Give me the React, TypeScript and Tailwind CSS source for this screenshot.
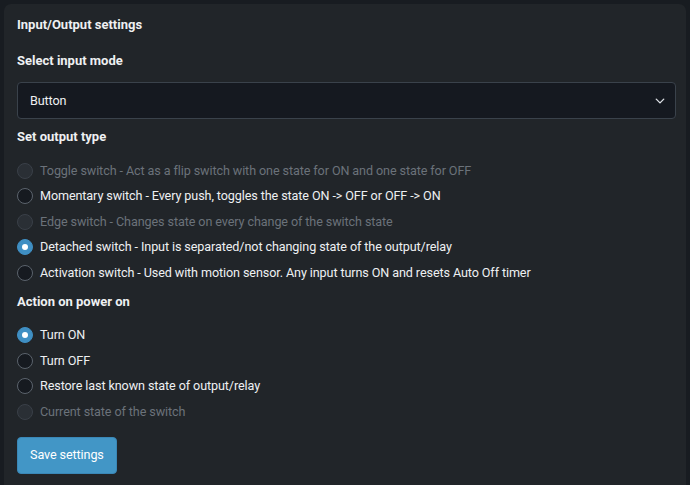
import React, { useState } from 'react';

interface Option {
  value: string;
  label: string;
  disabled?: boolean;
}

const outputTypes: Option[] = [
  { value: 'toggle', label: 'Toggle switch - Act as a flip switch with one state for ON and one state for OFF', disabled: true },
  { value: 'momentary', label: 'Momentary switch - Every push, toggles the state ON -> OFF or OFF -> ON' },
  { value: 'edge', label: 'Edge switch - Changes state on every change of the switch state', disabled: true },
  { value: 'detached', label: 'Detached switch - Input is separated/not changing state of the output/relay' },
  { value: 'activation', label: 'Activation switch - Used with motion sensor. Any input turns ON and resets Auto Off timer' },
];

const powerOnActions: Option[] = [
  { value: 'on', label: 'Turn ON' },
  { value: 'off', label: 'Turn OFF' },
  { value: 'restore', label: 'Restore last known state of output/relay' },
  { value: 'switch', label: 'Current state of the switch', disabled: true },
];

const RadioGroup: React.FC<{
  name: string;
  options: Option[];
  value: string;
  onChange: (v: string) => void;
}> = ({ name, options, value, onChange }) => (
  <div className="flex flex-col">
    {options.map(opt => {
      const checked = opt.value === value;
      return (
        <label
          key={opt.value}
          className={`flex h-[25.5px] items-center gap-[7px] ${opt.disabled ? 'cursor-default' : 'cursor-pointer'}`}
        >
          <input
            type="radio"
            name={name}
            className="sr-only"
            checked={checked}
            disabled={opt.disabled}
            onChange={() => onChange(opt.value)}
          />
          <span
            className={`flex h-[16px] w-[16px] shrink-0 items-center justify-center rounded-full border ${
              checked
                ? 'border-[#3f8fc3] bg-[#3f8fc3]'
                : opt.disabled
                ? 'border-[#3a4048] bg-[#2a2f35]'
                : 'border-[#5b636c] bg-[#161a20]'
            }`}
          >
            {checked && <span className="h-[6px] w-[6px] rounded-full bg-white" />}
          </span>
          <span
            className={`text-[12.6px] tracking-[-0.1px] ${opt.disabled ? 'text-[#6b727a]' : 'text-[#eef0f2]'}`}
          >
            {opt.label}
          </span>
        </label>
      );
    })}
  </div>
);

export default function App() {
  const [mode, setMode] = useState('button');
  const [outputType, setOutputType] = useState('detached');
  const [powerOn, setPowerOn] = useState('on');

  return (
    <div
      className="min-h-[485px] bg-[#181c21] px-[4px] pt-[4px] text-[13px] leading-[20px] text-[#eef0f2]"
      style={{ fontFamily: 'Roboto, "Helvetica Neue", Arial, sans-serif' }}
    >
      <div className="min-h-[481px] rounded-t-[7px] bg-[#212529] pl-[13px] pr-[10px] pt-[11px] pb-[12px]">
        <h2 className="font-bold">Input/Output settings</h2>

        <h3 className="mt-[16px] font-bold">Select input mode</h3>
        <div className="relative mt-[11px]">
          <select
            value={mode}
            onChange={e => setMode(e.target.value)}
            className="h-[37px] w-full appearance-none rounded-[4px] border border-[#3a424b] bg-[#151920] pl-[12px] text-[12.6px] tracking-[-0.1px] text-[#eef0f2] outline-none"
          >
            <option value="button">Button</option>
            <option value="switch">Switch</option>
          </select>
          <svg
            className="pointer-events-none absolute right-[11px] top-1/2 -translate-y-1/2"
            width="10"
            height="10"
            viewBox="0 0 16 16"
            fill="none"
            stroke="#dee2e6"
            strokeWidth="2.2"
            strokeLinecap="round"
            strokeLinejoin="round"
          >
            <path d="M2 5l6 6 6-6" />
          </svg>
        </div>

        <h3 className="mt-[8px] font-bold">Set output type</h3>
        <div className="mt-[11px]">
          <RadioGroup name="output" options={outputTypes} value={outputType} onChange={setOutputType} />
        </div>

        <h3 className="mt-[6px] font-bold">Action on power on</h3>
        <div className="mt-[11px]">
          <RadioGroup name="power" options={powerOnActions} value={powerOn} onChange={setPowerOn} />
        </div>

        <button
          type="button"
          className="mt-[12px] h-[37px] rounded-[4px] border border-[#3a87b6] bg-[#4296c6] px-[12px] text-[12.6px] tracking-[-0.1px] text-white"
        >
          Save settings
        </button>
      </div>
    </div>
  );
}
